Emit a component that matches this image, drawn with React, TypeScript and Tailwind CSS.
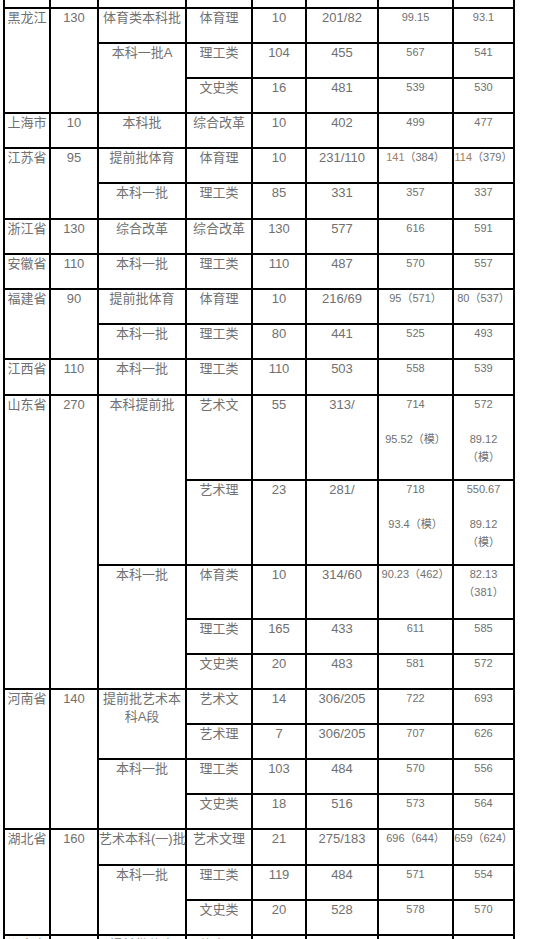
import React from 'react';

type Row = [string, string, string, string, string];
type Batch = { name: string; rows: Row[] };
type Group = { prov: string; quota: string; batches: Batch[] };

const groups: Group[] = [
  {
    prov: '黑龙江',
    quota: '130',
    batches: [
      { name: '体育类本科批', rows: [['体育理', '10', '201/82', '99.15', '93.1']] },
      {
        name: '本科一批A',
        rows: [
          ['理工类', '104', '455', '567', '541'],
          ['文史类', '16', '481', '539', '530'],
        ],
      },
    ],
  },
  {
    prov: '上海市',
    quota: '10',
    batches: [{ name: '本科批', rows: [['综合改革', '10', '402', '499', '477']] }],
  },
  {
    prov: '江苏省',
    quota: '95',
    batches: [
      { name: '提前批体育', rows: [['体育理', '10', '231/110', '*141（384）', '*114（379）']] },
      { name: '本科一批', rows: [['理工类', '85', '331', '357', '337']] },
    ],
  },
  {
    prov: '浙江省',
    quota: '130',
    batches: [{ name: '综合改革', rows: [['综合改革', '130', '577', '616', '591']] }],
  },
  {
    prov: '安徽省',
    quota: '110',
    batches: [{ name: '本科一批', rows: [['理工类', '110', '487', '570', '557']] }],
  },
  {
    prov: '福建省',
    quota: '90',
    batches: [
      { name: '提前批体育', rows: [['体育理', '10', '216/69', '95（571）', '80（537）']] },
      { name: '本科一批', rows: [['理工类', '80', '441', '525', '493']] },
    ],
  },
  {
    prov: '江西省',
    quota: '110',
    batches: [{ name: '本科一批', rows: [['理工类', '110', '503', '558', '539']] }],
  },
  {
    prov: '山东省',
    quota: '270',
    batches: [
      {
        name: '本科提前批',
        rows: [
          ['艺术文', '55', '313/', '714\n\n95.52（模）', '572\n\n89.12\n（模）'],
          ['艺术理', '23', '281/', '718\n\n93.4（模）', '550.67\n\n89.12\n（模）'],
        ],
      },
      {
        name: '本科一批',
        rows: [
          ['体育类', '10', '314/60', '90.23（462）', '82.13\n（381）'],
          ['理工类', '165', '433', '611', '585'],
          ['文史类', '20', '483', '581', '572'],
        ],
      },
    ],
  },
  {
    prov: '河南省',
    quota: '140',
    batches: [
      {
        name: '提前批艺术本科A段',
        rows: [
          ['艺术文', '14', '306/205', '722', '693'],
          ['艺术理', '7', '306/205', '707', '626'],
        ],
      },
      {
        name: '本科一批',
        rows: [
          ['理工类', '103', '484', '570', '556'],
          ['文史类', '18', '516', '573', '564'],
        ],
      },
    ],
  },
  {
    prov: '湖北省',
    quota: '160',
    batches: [
      { name: '艺术本科(一)批', rows: [['艺术文理', '21', '275/183', '696（644）', '659（624）']] },
      {
        name: '本科一批',
        rows: [
          ['理工类', '119', '484', '571', '554'],
          ['文史类', '20', '528', '578', '570'],
        ],
      },
    ],
  },
  {
    prov: '湖南省',
    quota: '120',
    batches: [{ name: '提前批体育', rows: [['体育理', '10', '', '', '']] }],
  },
];

const spans: Record<number, string> = {
  1: 'row-span-1',
  2: 'row-span-2',
  3: 'row-span-3',
  4: 'row-span-4',
  5: 'row-span-5',
};

const cell = 'bg-white text-center text-[#707070]';
const big = `${cell} text-[13px] leading-[18px]`;
const small = `${cell} text-[11px] leading-[17.5px] text-[#7a7a7a] whitespace-pre-line`;

function Score({ v }: { v: string }) {
  if (v.startsWith('*')) {
    const s = v.slice(1);
    const i = s.indexOf('（');
    return (
      <div className={`${small} whitespace-nowrap`}>
        <span className="text-[#a87a5a]">{s.slice(0, i)}</span>
        {s.slice(i)}
      </div>
    );
  }
  return <div className={small}>{v}</div>;
}

export default function App() {
  const cells: React.ReactNode[] = [];
  // empty strip of the row cut off at the top
  for (let i = 0; i < 8; i++) cells.push(<div key={`top${i}`} className="bg-white" />);

  groups.forEach((g, gi) => {
    const total = g.batches.reduce((n, b) => n + b.rows.length, 0);
    cells.push(
      <div key={`p${gi}`} className={`${big} ${spans[total]}`}>{g.prov}</div>,
      <div key={`q${gi}`} className={`${big} ${spans[total]}`}>{g.quota}</div>,
    );
    g.batches.forEach((b, bi) => {
      b.rows.forEach((r, ri) => {
        const k = `${gi}-${bi}-${ri}`;
        if (ri === 0) {
          cells.push(
            <div key={`b${k}`} className={`${big} ${spans[b.rows.length]}`}>
              <span className={b.name.includes('(') ? 'whitespace-nowrap' : ''}>{b.name}</span>
            </div>,
          );
        }
        cells.push(
          <div key={`c${k}`} className={big}>{r[0]}</div>,
          <div key={`n${k}`} className={big}>{r[1]}</div>,
          <div key={`s${k}`} className={big}>{r[2]}</div>,
        );
        cells.push(<Score key={`h${k}`} v={r[3]} />, <Score key={`l${k}`} v={r[4]} />);
      });
    });
  });

  return (
    <div className="h-[939px] w-[533px] overflow-hidden bg-white font-['Liberation_Sans','Noto_Sans_CJK_SC',sans-serif]">
      <div className="ml-[3px] grid w-max grid-cols-[44px_46px_86px_64px_52px_70px_73px_59px] grid-rows-[7px_33px_33px_33px_33px_33px_34px_33px_33px_33px_33px_34px_83px_83px_52px_33px_33px_33px_33px_33px_33px_34px_33px_33px_40px] gap-[2px] bg-black px-[2px]">
        {cells}
      </div>
    </div>
  );
}
